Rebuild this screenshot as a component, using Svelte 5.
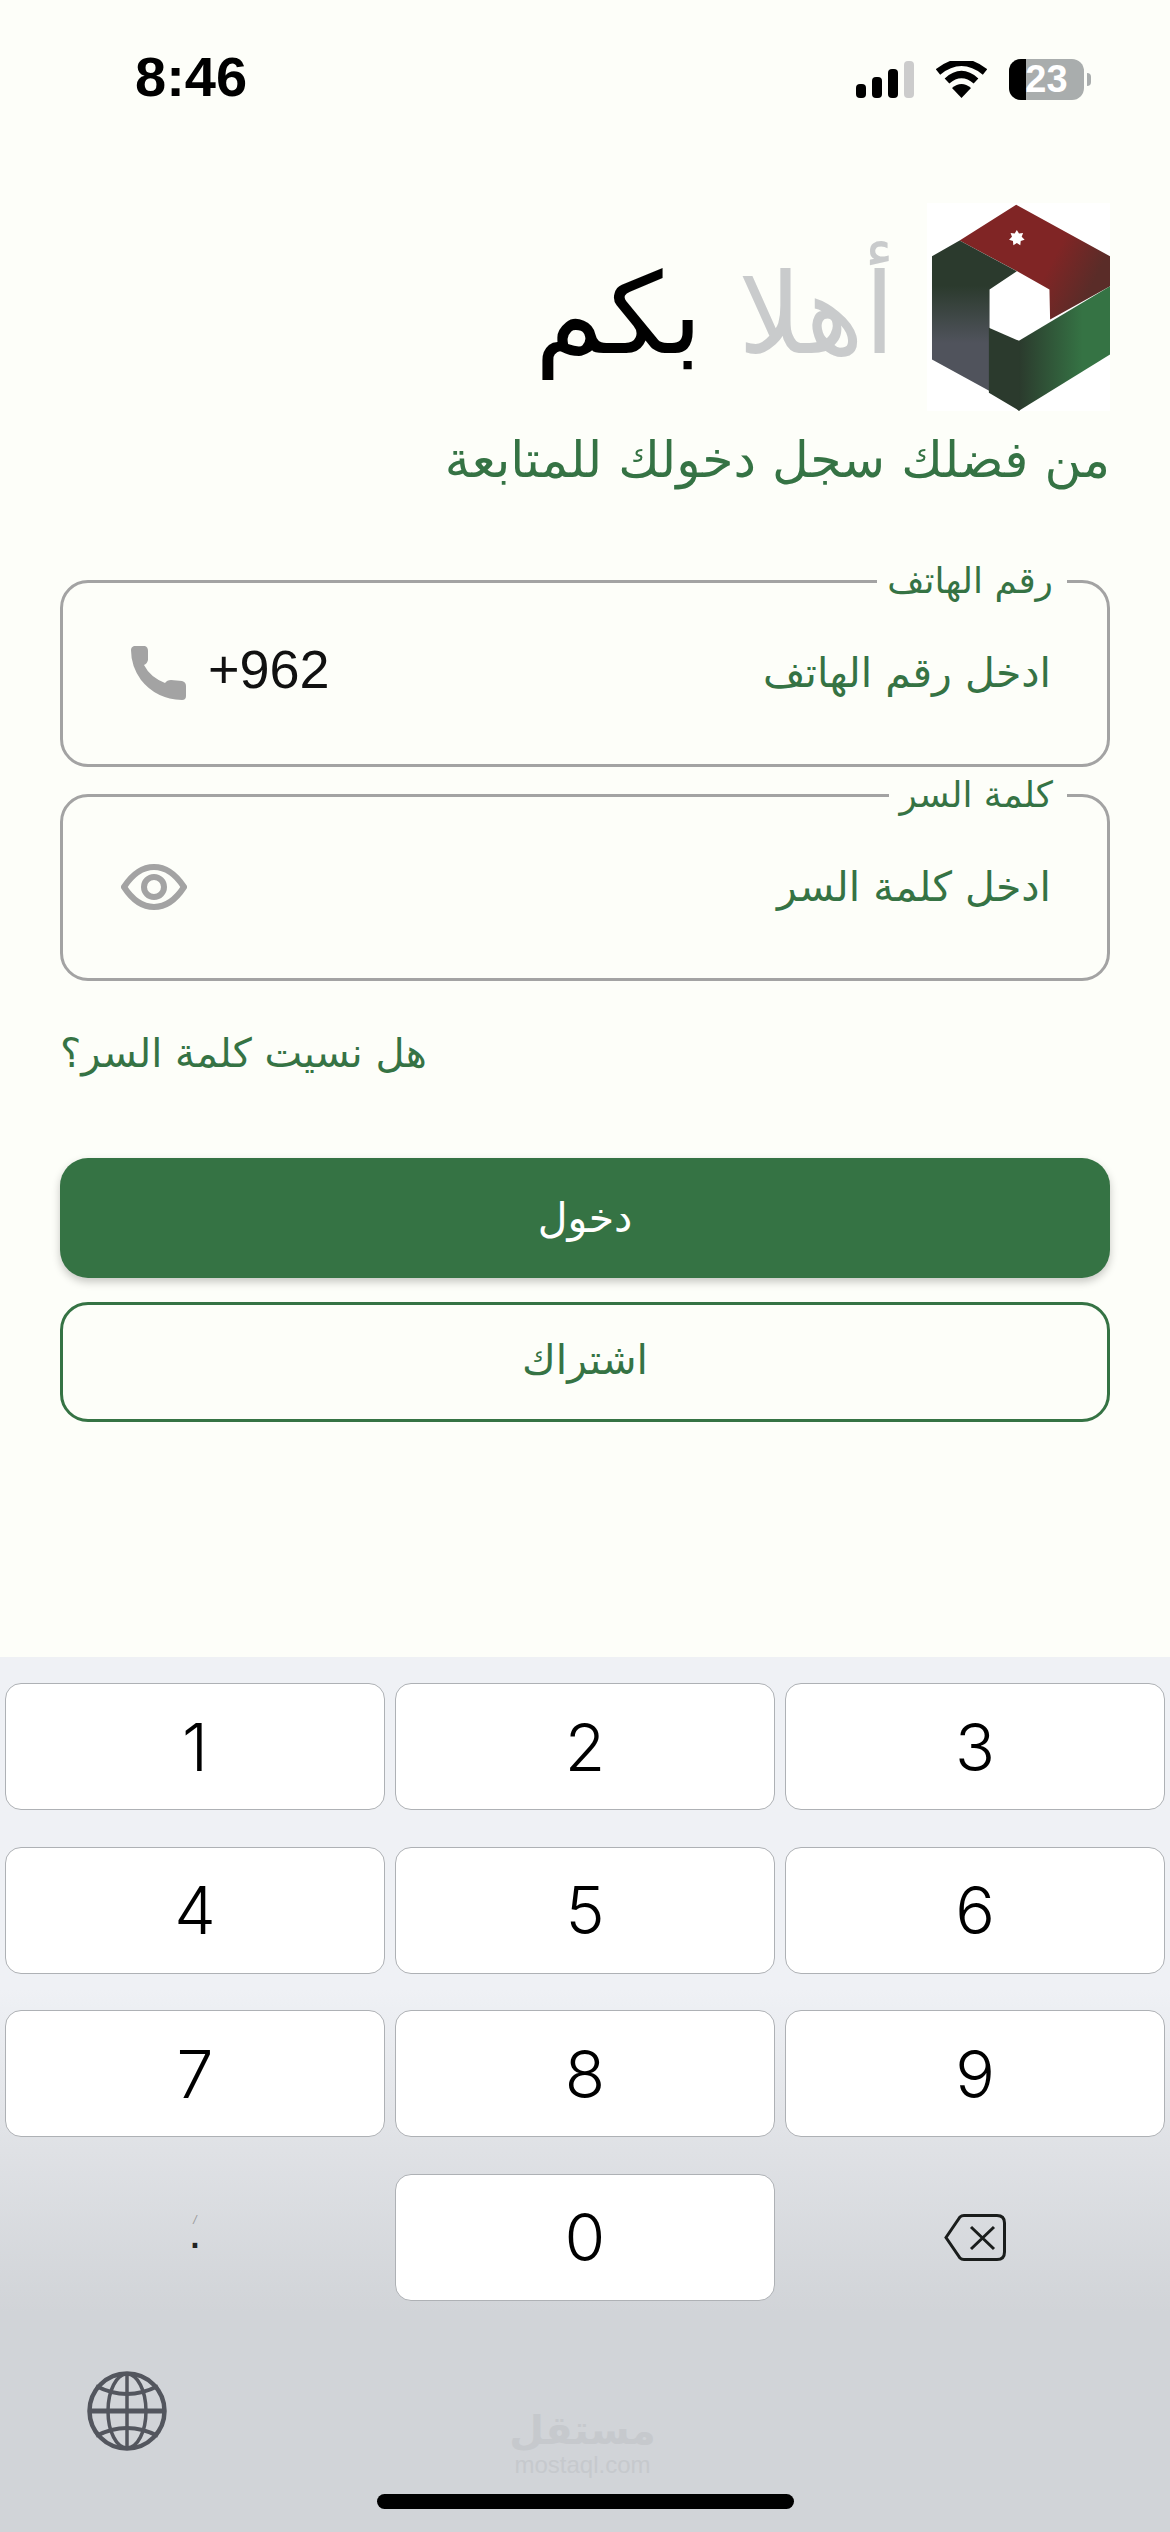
<script>
	const keys = ['1', '2', '3', '4', '5', '6', '7', '8', '9'];

	// little seven pointed star of the logo
	const star = Array.from({ length: 14 }, (_, i) => {
		const r = i % 2 ? 15 : 24;
		const a = (i * Math.PI) / 7 - Math.PI / 2;
		return `${(350 + r * Math.cos(a)).toFixed(1)},${(140 + r * Math.sin(a)).toFixed(1)}`;
	}).join(' ');
</script>

<div class="screen">
	<!-- status bar -->
	<div class="status">
		<span class="time">8:46</span>
		<div class="status-icons">
			<svg class="signal" viewBox="0 0 58 37" width="58" height="37">
				<rect x="0" y="23" width="10" height="14" rx="4" fill="#000" />
				<rect x="16" y="16" width="10" height="21" rx="4" fill="#000" />
				<rect x="32" y="8" width="10" height="29" rx="4" fill="#000" />
				<rect x="48" y="0" width="10" height="37" rx="4" fill="#ccc" />
			</svg>
			<svg class="wifi" viewBox="0 0 51 37" width="51" height="37">
				<path d="M2 11 Q25.500 -8 49 11" fill="none" stroke="#000" stroke-width="7" />
				<path d="M11 20 Q25.500 7 40 20" fill="none" stroke="#000" stroke-width="7" />
				<path d="M16 27 Q25.500 19 35 27 L25.500 37 Z" fill="#000" />
			</svg>
			<div class="battery">
				<div class="battery-body">
					<div class="battery-fill"></div>
					<span>23</span>
				</div>
				<div class="battery-cap"></div>
			</div>
		</div>
	</div>

	<main>
		<div class="brand">
			<svg class="logo" viewBox="80 35 550 625" width="183" height="208">
				<defs>
					<linearGradient id="leftPanel" x1="0" y1="0" x2="0" y2="1">
						<stop offset="0.3" stop-color="#2b3a2d" />
						<stop offset="0.68" stop-color="#50535c" />
					</linearGradient>
					<linearGradient id="greenPanel" x1="0" y1="0" x2="1" y2="0">
						<stop offset="0" stop-color="#2b3a2d" />
						<stop offset="0.7" stop-color="#357344" />
					</linearGradient>
					<linearGradient id="redPanel" x1="0" y1="0" x2="1" y2="0.4">
						<stop offset="0.7" stop-color="#802525" />
						<stop offset="1" stop-color="#5a2c28" />
					</linearGradient>
				</defs>
				<rect x="80" y="35" width="550" height="625" fill="#fff" />
				<polygon points="348,40 630,195 630,285 450,385 448,295 355,242 178,148" fill="url(#redPanel)" />
				<polygon points="178,148 350,240 268,295 268,600 95,505 95,195" fill="url(#leftPanel)" />
				<polygon points="355,450 630,285 630,490 355,660" fill="url(#greenPanel)" />
				<polygon points="266,410 358,450 358,660 266,605" fill="#2b3a2d" />
				<polygon points={star} fill="#fff" />
			</svg>
			<h1><span class="muted">أهلا</span> بكم</h1>
		</div>
		<p class="subtitle">من فضلك سجل دخولك للمتابعة</p>

		<fieldset>
			<legend>رقم الهاتف</legend>
			<div class="field-row">
				<span class="placeholder">ادخل رقم الهاتف</span>
				<div class="prefix">
					<span class="code" dir="ltr">+962</span>
					<svg viewBox="0 0 55 54" width="55" height="54">
						<path d="M3 0 L14 0 Q17 1 17 5 L17 14 Q16 18 13 19 Q19 31 34 37 Q36 34 40 34 L51 35 Q55 36 55 40 L55 50 Q55 54 51 54 Q25 53 10 34 Q0 20 0 4 Q0 1 3 0 Z" fill="#a3a3a3" />
					</svg>
				</div>
			</div>
		</fieldset>

		<fieldset class="second">
			<legend>كلمة السر</legend>
			<div class="field-row">
				<span class="placeholder">ادخل كلمة السر</span>
				<svg class="eye" viewBox="0 0 66 46" width="66" height="46">
					<path d="M3 23 Q16 3 33 3 Q50 3 63 23 Q50 43 33 43 Q16 43 3 23 Z" fill="none" stroke="#a3a3a3" stroke-width="6" />
					<circle cx="33" cy="23" r="10" fill="none" stroke="#a3a3a3" stroke-width="6" />
				</svg>
			</div>
		</fieldset>

		<div class="forgot">هل نسيت كلمة السر؟</div>

		<button class="primary">دخول</button>
		<button class="secondary">اشتراك</button>
	</main>

	<!-- numeric keyboard -->
	<div class="keyboard">
		<div class="keys">
			{#each keys as k}
				<div class="key">{k}</div>
			{/each}
			<div class="key plain sep"><i>/</i><b>.</b></div>
			<div class="key">0</div>
			<div class="key plain">
				<svg viewBox="0 0 62 47" width="62" height="47">
					<path d="M2 23.500 L16 3 Q17.500 1.500 20 1.500 L53 1.500 Q60.500 1.500 60.500 9 L60.500 38 Q60.500 45.500 53 45.500 L20 45.500 Q17.500 45.500 16 44 Z" fill="none" stroke="#1a1d1c" stroke-width="3" />
					<path d="M27 13 L50 35 M50 13 L27 35" stroke="#1a1d1c" stroke-width="3" fill="none" />
				</svg>
			</div>
		</div>
		<div class="kb-bottom">
			<svg class="globe" viewBox="0 0 80 80" width="82" height="80">
				<g fill="none" stroke="#53565e" stroke-width="3.500">
					<circle cx="40" cy="40" r="37.500" stroke-width="4.500" />
					<ellipse cx="40" cy="40" rx="19" ry="37" />
					<line x1="40" y1="3" x2="40" y2="77" />
					<line x1="3" y1="40" x2="77" y2="40" stroke-width="5" />
					<path d="M9 15 Q40 31 71 15" stroke-width="4" />
					<path d="M9 65 Q40 49 71 65" stroke-width="4" />
				</g>
			</svg>
			<div class="watermark">
				<span class="wm-ar">مستقل</span>
				<span class="wm-en">mostaql.com</span>
			</div>
			<div class="home-bar"></div>
		</div>
	</div>
</div>

<style>
	:global(body) {
		margin: 0;
		background: #fdfef9;
	}

	.screen {
		width: 1170px;
		height: 2532px;
		display: flex;
		flex-direction: column;
		overflow: hidden;
		font-family: 'DejaVu Sans', 'Liberation Sans', sans-serif;
		background: #fdfef9;
	}

	/* status bar */
	.status {
		height: 120px;
		padding: 33px 79px 0 135px;
		display: flex;
		justify-content: space-between;
		align-items: center;
		box-sizing: border-box;
	}

	.time {
		font-family: 'Liberation Sans', sans-serif;
		font-size: 56px;
		font-weight: 700;
		color: #000;
	}

	.status-icons {
		display: flex;
		align-items: center;
		gap: 22px;
		margin-top: 6px;
	}

	.battery {
		display: flex;
		align-items: center;
		gap: 3px;
	}

	.battery-body {
		position: relative;
		width: 75px;
		height: 41px;
		border-radius: 12px;
		background: #a9adad;
		overflow: hidden;
		display: flex;
		align-items: center;
		justify-content: center;
	}

	.battery-fill {
		position: absolute;
		left: 0;
		top: 0;
		bottom: 0;
		width: 17px;
		background: #000;
	}

	.battery-body span {
		position: relative;
		font-family: 'Liberation Sans', sans-serif;
		font-size: 38px;
		font-weight: 700;
		color: #fff;
	}

	.battery-cap {
		width: 4px;
		height: 13px;
		border-radius: 0 4px 4px 0;
		background: #a9adad;
	}

	main {
		flex: 1;
		padding: 0 60px;
		direction: rtl;
		display: flex;
		flex-direction: column;
	}

	.brand {
		display: flex;
		align-items: center;
		gap: 32px;
		margin-top: 81px;
		height: 211px;
	}

	.logo {
		flex: none;
	}

	h1 {
		margin: 14px 0 0;
		font-size: 112px;
		font-weight: 400;
		color: #000;
		line-height: 1;
	}

	.muted {
		color: #c9cbcc;
	}

	.subtitle {
		margin: 14px 0 0;
		font-size: 50.500px;
		line-height: 68px;
		color: #357344;
	}

	fieldset {
		margin: 68px 0 0;
		padding: 0 56px 0 58px;
		height: 205px;
		box-sizing: border-box;
		border: 3px solid #a3a3a3;
		border-radius: 28px;
	}

	fieldset.second {
		margin-top: 9px;
	}

	legend {
		margin-right: -16px;
		padding: 0 14px 0 10px;
		font-size: 36px;
		line-height: 38px;
		color: #357344;
	}

	.field-row {
		height: 164px;
		box-sizing: border-box;
		padding-bottom: 18px;
		display: flex;
		align-items: center;
		justify-content: space-between;
	}

	.placeholder {
		font-size: 41px;
		color: #357344;
	}

	.prefix {
		display: flex;
		align-items: center;
		gap: 22px;
		margin-left: 10px;
	}

	.code {
		font-family: 'Liberation Sans', sans-serif;
		font-size: 54px;
		color: #111;
		margin-bottom: 8px;
	}

	.forgot {
		margin-top: 44px;
		font-size: 40px;
		line-height: 56px;
		color: #357344;
		text-align: left;
	}

	button {
		height: 120px;
		border-radius: 28px;
		font-family: inherit;
		font-size: 41px;
		padding: 0;
	}

	.primary {
		margin-top: 77px;
		border: 0;
		background: #357344;
		color: #fff;
		box-shadow: 0 4px 8px rgba(0, 0, 0, 0.22);
	}

	.secondary {
		margin-top: 24px;
		border: 3px solid #357344;
		background: transparent;
		color: #357344;
		padding-bottom: 4px;
	}

	/* keyboard */
	.keyboard {
		height: 875px;
		flex: none;
		box-sizing: border-box;
		padding: 26px 5px 0;
		background: linear-gradient(#eff1f5 0%, #eff1f5 38%, #e0e2e6 55%, #d1d4d8 75%, #d1d4d8 100%);
	}

	.keys {
		display: grid;
		grid-template-columns: repeat(3, 380px);
		grid-auto-rows: 127px;
		column-gap: 10px;
		row-gap: 36.500px;
	}

	.key {
		display: flex;
		align-items: center;
		justify-content: center;
		background: #fff;
		border: 1.500px solid #aeb1b5;
		border-radius: 16px;
		box-sizing: border-box;
		font-family: Inter, sans-serif;
		font-size: 66px;
		font-weight: 300;
		color: #000;
	}

	.key.plain {
		background: none;
		border: 0;
	}

	.sep {
		flex-direction: column;
		padding-bottom: 24px;
	}

	.sep i {
		font-family: 'Liberation Sans', sans-serif;
		font-size: 12px;
		line-height: 14px;
		color: #9a9a9a;
	}

	.sep b {
		font-family: 'Liberation Sans', sans-serif;
		font-size: 48px;
		line-height: 10px;
		color: #222;
	}

	.kb-bottom {
		position: relative;
		flex: 1;
	}

	.globe {
		position: absolute;
		left: 81px;
		top: 70px;
	}

	.watermark {
		position: absolute;
		left: 505px;
		top: 106px;
		width: 145px;
		display: flex;
		flex-direction: column;
		align-items: center;
		color: #c6c9cd;
	}

	.wm-ar {
		font-size: 40px;
		line-height: 46px;
		font-weight: 700;
	}

	.wm-en {
		font-family: 'Liberation Sans', sans-serif;
		font-size: 24px;
		line-height: 24px;
	}

	.home-bar {
		position: absolute;
		left: 372px;
		top: 193px;
		width: 417px;
		height: 15px;
		border-radius: 8px;
		background: #000;
	}
</style>
